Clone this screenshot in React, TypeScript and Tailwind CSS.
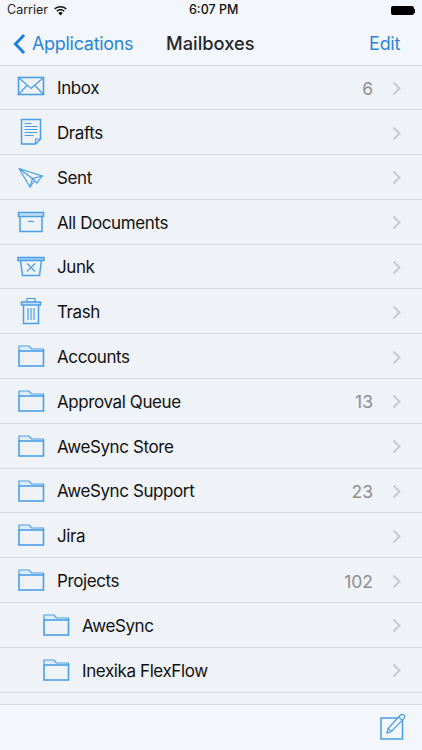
import type { ReactNode } from 'react'

const stroke = '#4a9fe8'

const Svg = ({ children, w = 30, h = 28 }: { children: ReactNode; w?: number; h?: number }) => (
  <svg width={w} height={h} viewBox={`0 0 ${w} ${h}`} fill="none" stroke={stroke} strokeWidth="1.2">
    {children}
  </svg>
)

const InboxIcon = () => (
  <Svg>
    <rect x="2.500" y="4.500" width="25" height="17" strokeWidth="1.600" />
    <path d="M3 5l12 10.500L27 5M3 21l8.500-9M27 21l-8.500-9" />
  </Svg>
)

const DraftsIcon = () => (
  <Svg>
    <path d="M5.500 1.500h19v19.500l-5 5h-14z" strokeWidth="1.500" />
    <path d="M19.500 26v-5h5" />
    <path d="M8.500 5.500h7M8.500 8.500h13M8.500 11.500h13M8.500 14.500h13M8.500 17.500h9" strokeWidth="1.100" />
  </Svg>
)

const SentIcon = () => (
  <Svg>
    <path d="M3 5.500L26 13l-9.500 2.500z" />
    <path d="M3 5.500L14 24l2.500-8.500" />
    <path d="M16.500 15.500l4.500 4.500L26 13M14 24l4.500-6.500" />
  </Svg>
)

const DocumentsIcon = () => (
  <Svg>
    <rect x="2.500" y="4.500" width="25" height="4" fill="#c4dff6" strokeWidth="1.500" />
    <path d="M4 8.500v15h22v-15" strokeWidth="1.500" />
    <path d="M12 13.500h6" />
  </Svg>
)

const JunkIcon = () => (
  <Svg>
    <rect x="2" y="4.500" width="26" height="3" fill="#a9d0f2" strokeWidth="1.500" />
    <path d="M4.500 7.500l2 15h17l2-15" strokeWidth="1.500" />
    <path d="M11 10.500l8 8M19 10.500l-8 8" />
  </Svg>
)

const TrashIcon = () => (
  <Svg>
    <path d="M11 5V1.500h8V5" />
    <rect x="5.500" y="5" width="19" height="3" fill="#c4dff6" strokeWidth="1.500" />
    <path d="M7.500 8v18.500h15V8" strokeWidth="1.500" />
    <path d="M12 11v12M15 11v12M18 11v12" />
  </Svg>
)

const FolderIcon = () => (
  <Svg h={26}>
    <path d="M3 8V3h10l2.500 3h12v2" fill="#e0edf9" strokeWidth="1.200" />
    <rect x="3" y="8" width="24.500" height="15" strokeWidth="1.600" />
  </Svg>
)

const Chevron = () => (
  <svg className="mt-[2px]" width="10" height="15" viewBox="0 0 10 15" fill="none" stroke="#c7c7cc" strokeWidth="1.800">
    <path d="M1.500 1.500l6 6-6 6" />
  </svg>
)

type Row = { label: string; icon: ReactNode; count?: number; nested?: boolean }

const rows: Row[] = [
  { label: 'Inbox', icon: <InboxIcon />, count: 6 },
  { label: 'Drafts', icon: <DraftsIcon /> },
  { label: 'Sent', icon: <SentIcon /> },
  { label: 'All Documents', icon: <DocumentsIcon /> },
  { label: 'Junk', icon: <JunkIcon /> },
  { label: 'Trash', icon: <TrashIcon /> },
  { label: 'Accounts', icon: <FolderIcon /> },
  { label: 'Approval Queue', icon: <FolderIcon />, count: 13 },
  { label: 'AweSync Store', icon: <FolderIcon /> },
  { label: 'AweSync Support', icon: <FolderIcon />, count: 23 },
  { label: 'Jira', icon: <FolderIcon /> },
  { label: 'Projects', icon: <FolderIcon />, count: 102 },
  { label: 'AweSync', icon: <FolderIcon />, nested: true },
  { label: 'Inexika FlexFlow', icon: <FolderIcon />, nested: true },
]

export default function App() {
  return (
    <div className="w-[422px] h-[750px] overflow-hidden flex flex-col bg-[#eff2f7] text-black font-['Inter',sans-serif]">
      {/* Status bar + nav */}
      <div className="h-[65.500px] shrink-0 bg-[#f3f6fb] border-b border-[#d6d9de]">
        <div className="h-[21px] px-[7px] flex items-center justify-between text-[12.500px] relative">
          <div className="flex items-center gap-[6px] text-[#222]">
            Carrier
            <svg width="13" height="10" viewBox="0 0 13 10" fill="#111">
              <path d="M6.500 0C4 0 1.800 1 .2 2.600l1 1C2.600 2.200 4.400 1.400 6.500 1.400s3.900.8 5.300 2.200l1-1C11.200 1 9 0 6.500 0zM6.500 3C4.800 3 3.400 3.700 2.300 4.700l1 1c.8-.8 2-1.300 3.200-1.300s2.400.5 3.200 1.300l1-1C9.600 3.700 8.200 3 6.500 3zM6.500 6c-.9 0-1.700.3-2.200.9L6.500 9.500l2.200-2.600C8.200 6.300 7.400 6 6.500 6z" />
            </svg>
          </div>
          <div className="absolute left-[189px] font-medium text-[#111]">6:07 PM</div>
          <div className="flex items-center">
            <div className="w-[23px] h-[9px] bg-black rounded-[2px]" />
            <div className="w-[1.500px] h-[4px] bg-black" />
          </div>
        </div>
        <div className="h-[44px] relative flex items-center justify-between pl-[13px] pr-[22px] pt-[1px]">
          <div className="flex items-center gap-[6px] text-[#2a86d8] text-[18px] tracking-[-0.300px]">
            <svg width="13" height="22" viewBox="0 0 13 22" fill="none" stroke="#1d7fe0" strokeWidth="3">
              <path d="M11 2L2.500 11l8.500 9" />
            </svg>
            Applications
          </div>
          <div className="absolute left-[166px] text-[18.300px] font-medium text-[#26282c]">Mailboxes</div>
          <div className="text-[#2a86d8] text-[18px] tracking-[-0.300px]">Edit</div>
        </div>
      </div>

      {/* Mailbox list */}
      <div className="flex-1 min-h-0">
        {rows.map((row) => (
          <div
            key={row.label}
            className={`h-[44.800px] flex items-center pr-[20px] border-b border-[#d9dadd] ${row.nested ? 'pl-[41px]' : 'pl-[16px]'}`}
          >
            <div className="w-[30px] flex justify-center">{row.icon}</div>
            <span className="ml-[11px] flex-1 text-[17px] tracking-[-0.400px] text-[#111] pt-[3px]">{row.label}</span>
            {row.count !== undefined && <span className="mr-[19px] text-[17.500px] text-[#8e8e93] pt-[3px]">{row.count}</span>}
            <Chevron />
          </div>
        ))}
      </div>

      {/* Toolbar */}
      <div className="h-[46px] shrink-0 bg-[#f3f6fb] border-t border-[#d6d9de] flex justify-end items-start pt-[7px] pr-[15px]">
        <svg width="27" height="28" viewBox="0 0 27 28" fill="none" stroke={stroke} strokeWidth="1.200">
          <path d="M1 6h21.500V27H1z" strokeWidth="1.500" />
          <path d="M8 16.500L20 3.500c1-1 2.500-1.500 3.800-.5s1 2.500 0 3.600L11.500 19.500l-4.500 1.500z" fill="#f3f6fb" />
          <path d="M8 16.500l3.500 3" />
          <path d="M18.500 5l3.800 3.200" />
        </svg>
      </div>
    </div>
  )
}
